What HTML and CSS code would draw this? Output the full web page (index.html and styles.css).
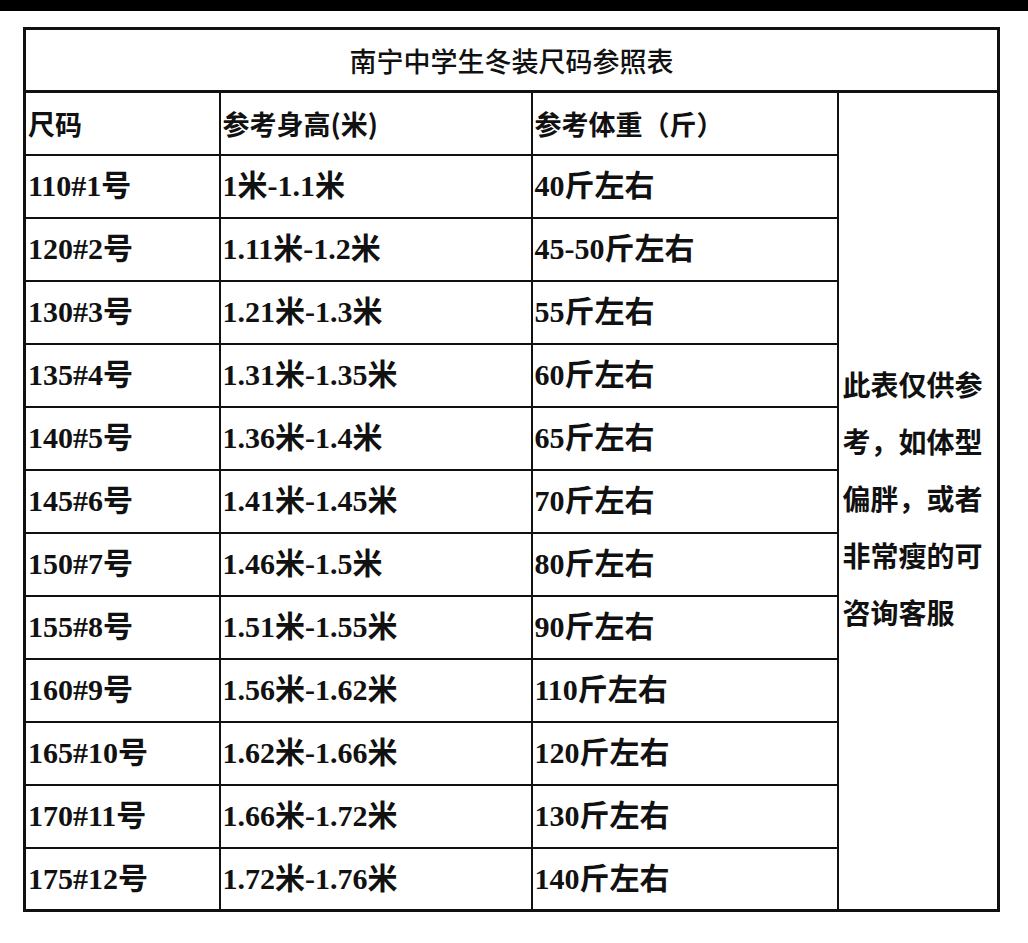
FILE: index.html
```html
<!DOCTYPE html>
<html lang="zh-CN">
<head>
<meta charset="utf-8">
<title>南宁中学生冬装尺码参照表</title>
<link rel="stylesheet" href="styles.css">
</head>
<body>
<div class="topbar"></div>
<table class="size-table">
  <colgroup>
    <col class="c1"><col class="c2"><col class="c3"><col class="c4">
  </colgroup>
  <tr class="title-row"><td colspan="4" class="title">南宁中学生冬装尺码参照表</td></tr>
  <tr class="head-row">
    <td class="head">尺码</td>
    <td class="head">参考身高(米)</td>
    <td class="head">参考体重（斤）</td>
    <td class="note" rowspan="13">此表仅供参考，如体型偏胖，或者非常瘦的可咨询客服</td>
  </tr>
  <tr><td>110#1号</td><td>1米-1.1米</td><td>40斤左右</td></tr>
  <tr><td>120#2号</td><td>1.11米-1.2米</td><td>45-50斤左右</td></tr>
  <tr><td>130#3号</td><td>1.21米-1.3米</td><td>55斤左右</td></tr>
  <tr><td>135#4号</td><td>1.31米-1.35米</td><td>60斤左右</td></tr>
  <tr><td>140#5号</td><td>1.36米-1.4米</td><td>65斤左右</td></tr>
  <tr><td>145#6号</td><td>1.41米-1.45米</td><td>70斤左右</td></tr>
  <tr><td>150#7号</td><td>1.46米-1.5米</td><td>80斤左右</td></tr>
  <tr><td>155#8号</td><td>1.51米-1.55米</td><td>90斤左右</td></tr>
  <tr><td>160#9号</td><td>1.56米-1.62米</td><td>110斤左右</td></tr>
  <tr><td>165#10号</td><td>1.62米-1.66米</td><td>120斤左右</td></tr>
  <tr><td>170#11号</td><td>1.66米-1.72米</td><td>130斤左右</td></tr>
  <tr><td>175#12号</td><td>1.72米-1.76米</td><td>140斤左右</td></tr>
</table>
</body>
</html>
```
FILE: styles.css
```css
html, body {
  margin: 0;
  padding: 0;
  background: #ffffff;
}

.topbar {
  height: 11px;
  background: #000000;
}

.size-table {
  margin: 16px 0 0 23px;
  width: 974px;
  table-layout: fixed;
  border-collapse: collapse;
  border: 3px solid #111111;
  color: #111111;
  font-family: "Liberation Serif", "Noto Sans CJK SC", serif;
  font-weight: 700;
  font-size: 30px;
}

.c1 { width: 195px; }
.c2 { width: 312px; }
.c3 { width: 306px; }
.c4 { width: 161px; }

.size-table td {
  border: 2px solid #111111;
  padding: 0 2px;
  height: 63px;
  box-sizing: border-box;
  vertical-align: middle;
  text-align: left;
  white-space: nowrap;
  line-height: 1;
}

.size-table tr:last-child td {
  border-bottom: 3px solid #111111;
}

.size-table td.title {
  text-align: center;
  font-family: "Noto Sans CJK SC", sans-serif;
  font-weight: 500;
  font-size: 27px;
  border-bottom-width: 3px;
}

.size-table td.head {
  font-family: "Noto Sans CJK SC", sans-serif;
  font-size: 27px;
  font-weight: 700;
}

.size-table td.note {
  font-family: "Noto Sans CJK SC", sans-serif;
  font-size: 28px;
  font-weight: 700;
  line-height: 57px;
  white-space: normal;
  padding: 0 2px 6px 4px;
  border-right-width: 3px;
  border-bottom-width: 3px;
}
```
